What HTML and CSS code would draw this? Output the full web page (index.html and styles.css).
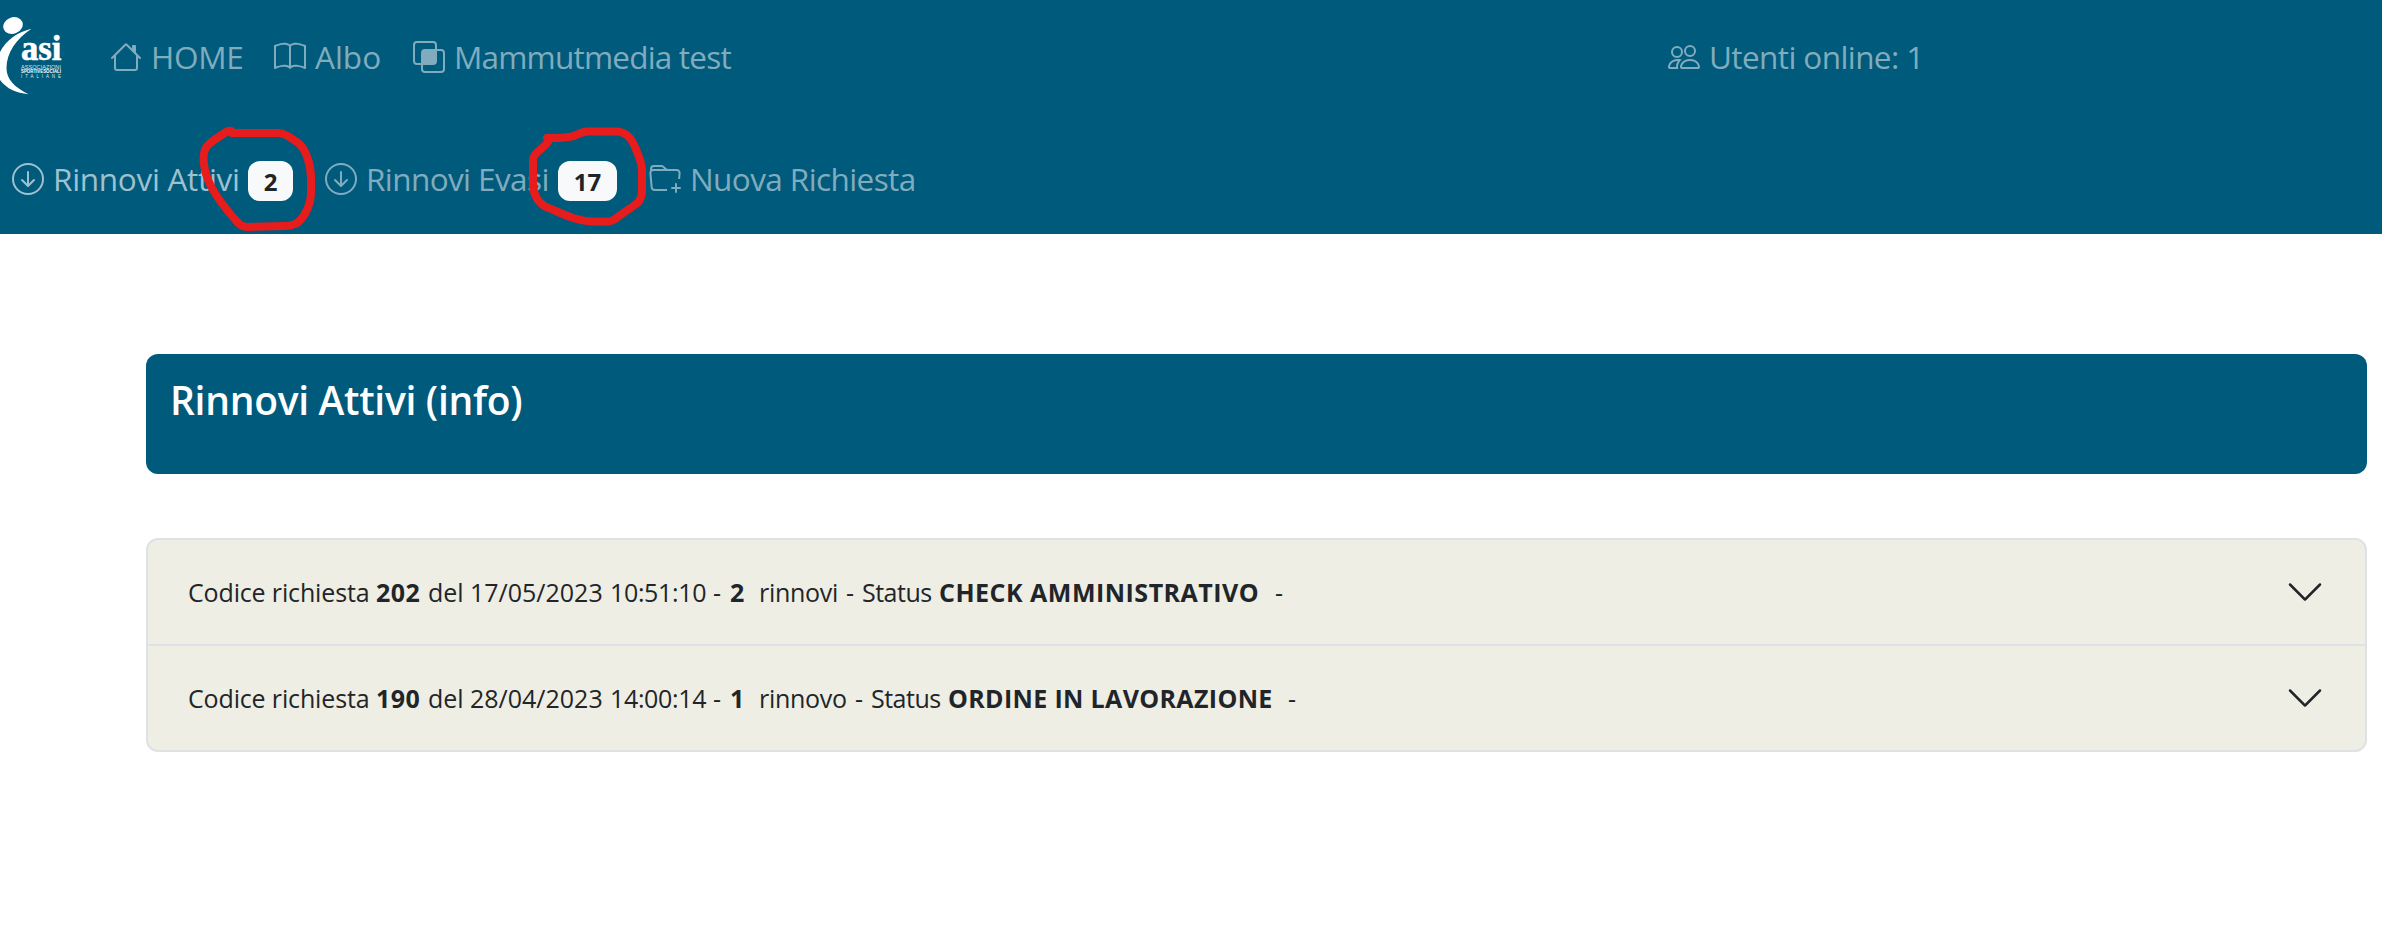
FILE: index.html
```html
<!DOCTYPE html>
<html lang="it">
<head>
<meta charset="utf-8">
<title>Rinnovi Attivi</title>
<link rel="stylesheet" href="styles.css">
</head>
<body>
<header class="header">
  <nav class="nav nav-main">
    <a class="brand"><svg class="logo" width="64" height="80" viewBox="0 17 64 80">
      <ellipse cx="13" cy="25.5" rx="10" ry="8.2" transform="rotate(-22 13 25.5)" fill="#fff"/>
      <path d="M31.500 28.800C18 32 6 40 0 52L-3 66L0 80C7 89 16 93 28.500 94.200C14 87 6.500 79 6.500 68C6.500 53 16 39 31.500 28.800Z" fill="#fff"/>
      <text class="logo-name" x="21" y="60" textLength="40.500" lengthAdjust="spacingAndGlyphs">asi</text>
      <text class="logo-sub" x="21" y="68.800" textLength="40" lengthAdjust="spacingAndGlyphs">ASSOCIAZIONI</text>
      <text class="logo-sub logo-strong" x="21" y="73.200" textLength="40" lengthAdjust="spacingAndGlyphs">SPORTIVESOCIALI</text>
      <text class="logo-sub" x="21" y="77.800" textLength="40">ITALIANE</text>
    </svg></a>
    <a class="link home"><svg class="icon" viewBox="0 0 16 16"><path d="M8.707 1.500a1 1 0 0 0-1.414 0L.646 8.146a.5.5 0 0 0 .708.708L2 8.207V13.500A1.500 1.500 0 0 0 3.500 15h9a1.500 1.500 0 0 0 1.500-1.500V8.207l.646.647a.5.5 0 0 0 .708-.708L13 5.793V2.500a.5.5 0 0 0-.5-.5h-1a.5.5 0 0 0-.5.5v1.293L8.707 1.500ZM13 7.207V13.500a.5.5 0 0 1-.5.5h-9a.5.5 0 0 1-.5-.5V7.207l5-5 5 5Z"/></svg><span>HOME</span></a>
    <a class="link albo"><svg class="icon" viewBox="0 0 16 16"><path d="M1 2.828c.885-.37 2.154-.769 3.388-.893 1.330-.134 2.458.063 3.112.752v9.746c-.935-.53-2.120-.603-3.213-.493-1.180.12-2.370.461-3.287.811V2.828zm7.500-.141c.654-.689 1.782-.886 3.112-.752 1.234.124 2.503.523 3.388.893v9.923c-.918-.35-2.107-.692-3.287-.81-1.094-.111-2.278-.039-3.213.492V2.687zM8 1.783C7.015.936 5.587.81 4.287.94c-1.514.153-3.042.672-3.994 1.105A.5.5 0 0 0 0 2.500v11a.5.5 0 0 0 .707.455c.882-.4 2.303-.881 3.680-1.020 1.409-.142 2.590.087 3.223.877a.5.5 0 0 0 .78 0c.633-.79 1.814-1.019 3.222-.877 1.378.139 2.800.62 3.681 1.020A.5.5 0 0 0 16 13.500v-11a.5.5 0 0 0-.293-.455c-.952-.433-2.480-.952-3.994-1.105C10.413.809 8.985.936 8 1.783z"/></svg><span>Albo</span></a>
    <a class="link mammut"><svg class="icon" viewBox="0 0 16 16"><path d="M0 2a2 2 0 0 1 2-2h8a2 2 0 0 1 2 2v2h2a2 2 0 0 1 2 2v8a2 2 0 0 1-2 2H6a2 2 0 0 1-2-2v-2H2a2 2 0 0 1-2-2V2zm5 10v2a1 1 0 0 0 1 1h8a1 1 0 0 0 1-1V6a1 1 0 0 0-1-1h-2v5a2 2 0 0 1-2 2H5zm6-8V2a1 1 0 0 0-1-1H2a1 1 0 0 0-1 1v8a1 1 0 0 0 1 1h2V6a2 2 0 0 1 2-2h5z"/></svg><span>Mammutmedia test</span></a>
    <a class="link users"><svg class="icon" viewBox="0 0 16 16"><path d="M15 14s1 0 1-1-1-4-5-4-5 3-5 4 1 1 1 1h8Zm-7.978-1A.261.261 0 0 1 7 12.996c.001-.264.167-1.030.76-1.720C8.312 10.629 9.282 10 11 10c1.717 0 2.687.63 3.240 1.276.593.69.758 1.457.76 1.720l-.008.002a.274.274 0 0 1-.014.002H7.022ZM11 7a2 2 0 1 0 0-4 2 2 0 0 0 0 4Zm3-2a3 3 0 1 1-6 0 3 3 0 0 1 6 0ZM6.936 9.280a5.880 5.880 0 0 0-1.230-.247A7.350 7.350 0 0 0 5 9c-4 0-5 3-5 4 0 .667.333 1 1 1h4.216A2.238 2.238 0 0 1 5 13c0-1.010.377-2.042 1.090-2.904.243-.294.526-.569.846-.816ZM4.920 10A5.493 5.493 0 0 0 4 13H1c0-.26.164-1.030.76-1.724.545-.636 1.492-1.256 3.160-1.275ZM1.500 5.500a3 3 0 1 1 6 0 3 3 0 0 1-6 0Zm3-2a2 2 0 1 0 0 4 2 2 0 0 0 0-4Z"/></svg><span>Utenti online: 1</span></a>
  </nav>
  <nav class="nav nav-sub">
    <a class="link attivi active"><svg class="icon" viewBox="0 0 16 16"><path d="M1 8a7 7 0 1 0 14 0A7 7 0 0 0 1 8zm15 0A8 8 0 1 1 0 8a8 8 0 0 1 16 0zM8.500 4.500a.5.5 0 0 0-1 0v5.793L5.354 8.146a.5.5 0 1 0-.708.708l3 3a.5.5 0 0 0 .708 0l3-3a.5.5 0 0 0-.708-.708L8.500 10.293V4.500z"/></svg><span>Rinnovi Attivi</span><b class="badge badge-one">2</b></a>
    <a class="link evasi"><svg class="icon" viewBox="0 0 16 16"><path d="M1 8a7 7 0 1 0 14 0A7 7 0 0 0 1 8zm15 0A8 8 0 1 1 0 8a8 8 0 0 1 16 0zM8.500 4.500a.5.5 0 0 0-1 0v5.793L5.354 8.146a.5.5 0 1 0-.708.708l3 3a.5.5 0 0 0 .708 0l3-3a.5.5 0 0 0-.708-.708L8.500 10.293V4.500z"/></svg><span>Rinnovi Evasi</span><b class="badge badge-two">17</b></a>
    <a class="link nuova"><svg class="icon" viewBox="0 0 16 16"><path d="m.5 3 .04.87a1.990 1.990 0 0 0-.342 1.311l.637 7A2 2 0 0 0 2.826 14H9v-1H2.826a1 1 0 0 1-.995-.91l-.637-7A1 1 0 0 1 2.190 4h11.620a1 1 0 0 1 .996 1.090L14.540 8h1.005l.256-2.819A2 2 0 0 0 13.810 3H9.828a2 2 0 0 1-1.414-.586l-.828-.828A2 2 0 0 0 6.172 1H2.500a2 2 0 0 0-2 2Zm5.672-1a1 1 0 0 1 .707.293L7.586 3H2.190c-.24 0-.47.042-.683.12L1.500 2.980a1 1 0 0 1 1-.98h3.672Z"/><path d="M13.500 10a.5.5 0 0 1 .5.5V12h1.500a.5.5 0 1 1 0 1H14v1.500a.5.5 0 1 1-1 0V13h-1.500a.5.5 0 0 1 0-1H13v-1.500a.5.5 0 0 1 .5-.5Z"/></svg><span>Nuova Richiesta</span></a>
  </nav>
</header>
<svg class="marks" width="680" height="240" viewBox="0 0 680 240">
  <path d="M232 133H279C285 133 291 138 297 142C306 148 311 165 311 178V192C311 207 302 221 295 224Q291 226 285 226L248 227C239 227 236 220 232 216C221 203 210 188 206 174C203 163 202 151 208 145C212 141 223 134 227 131.500Q229 130.500 231 131"/>
  <path d="M547 138C558 138 569 138 575 135.500C580 133 583 131.500 588 131.500H616C628 131.500 633 141 637 152C640 159 642 163 642 171V190C642 200 638 203 632 207L619 216C615 219 613 221.500 608 221.500H594C574 221.500 558 211 546 207C538 203 533 194 533 184V160C533 153 543 149 547 143Q549 141 549 138"/>
</svg>
<main class="content">
  <section class="banner"><h1>Rinnovi Attivi (info)</h1></section>
  <section class="accordion">
    <div class="item">
      <p class="line">
        <span class="codice">Codice richiesta</span><b class="num">202</b><span class="del">del</span><span class="date">17/05/2023</span><span class="time">10:51:10</span><span class="dash">-</span><b class="count">2</b><span class="rinnovi">rinnovi</span><span class="sep">-</span><span class="status">Status</span><b class="state check">CHECK AMMINISTRATIVO</b><span>-</span>
      </p>
      <svg class="chevron" viewBox="0 0 16 16"><path d="M1.646 4.646a.5.5 0 0 1 .708 0L8 10.293l5.646-5.647a.5.5 0 0 1 .708.708l-6 6a.5.5 0 0 1-.708 0l-6-6a.5.5 0 0 1 0-.708z"/></svg>
    </div>
    <div class="item">
      <p class="line">
        <span class="codice">Codice richiesta</span><b class="num">190</b><span class="del">del</span><span class="date">28/04/2023</span><span class="time">14:00:14</span><span class="dash">-</span><b class="count">1</b><span class="rinnovo">rinnovo</span><span class="sep">-</span><span class="status">Status</span><b class="state ordine">ORDINE IN LAVORAZIONE</b><span>-</span>
      </p>
      <svg class="chevron" viewBox="0 0 16 16"><path d="M1.646 4.646a.5.5 0 0 1 .708 0L8 10.293l5.646-5.647a.5.5 0 0 1 .708.708l-6 6a.5.5 0 0 1-.708 0l-6-6a.5.5 0 0 1 0-.708z"/></svg>
    </div>
  </section>
</main>
</body>
</html>
```
FILE: styles.css
```css
* { box-sizing: border-box; }
body {
  margin: 0;
  background: #fff;
  color: #212529;
  font-family: "Open Sans", "Noto Sans", sans-serif;
}
.header {
  height: 234px;
  background: #005a7c;
}
.nav {
  display: flex;
  align-items: center;
}
.nav-main { height: 114px; }
.nav-sub { height: 120px; padding: 11px 0 0 12px; align-items: flex-start; }
.brand { width: 110px; height: 80px; }
.logo { display: block; }
.logo-name {
  font: bold 36px "Liberation Serif", serif;
  fill: #fff;
  stroke: #fff;
  stroke-width: .6px;
}
.logo-sub { font: 4.500px "Liberation Sans", sans-serif; fill: #dbe8ed; }
.logo-strong { font-weight: bold; fill: #fff; }
.link {
  display: flex;
  align-items: center;
  height: 114px;
  color: #80acbd;
  font-size: 31.500px;
  letter-spacing: -.6px;
  white-space: nowrap;
}
.link span { padding-bottom: 2px; }
.nav-sub .link { height: 108px; }
.link.active { color: #9fc1ce; }
.icon {
  width: 32px;
  height: 32px;
  flex: none;
  margin-right: 9px;
  fill: currentColor;
}
.home { width: 164px; letter-spacing: -.3px; }
.albo { width: 139px; letter-spacing: 0; }
.mammut { width: 1255px; letter-spacing: -.8px; }
.attivi { width: 313px; letter-spacing: -.3px; }
.evasi { width: 324px; }
.attivi span { width: 195px; }
.evasi span { width: 192px; }
.badge {
  height: 40px;
  margin-top: 4px;
  border-radius: 12px;
  background: #f8f9fa;
  color: #212529;
  font-size: 24px;
  letter-spacing: 0;
  line-height: 42px;
  text-align: center;
}
.badge-one { width: 45px; }
.badge-two { width: 59px; }
.marks {
  position: absolute;
  left: 0;
  top: 0;
  fill: none;
  stroke: #e71c1c;
  stroke-width: 8px;
  stroke-linecap: round;
  stroke-linejoin: round;
}
.content { padding: 120px 15px 0 146px; }
.banner {
  height: 120px;
  padding: 20px 24px;
  border-radius: 12px;
  background: #005a7c;
}
h1 {
  margin: 0;
  color: #fff;
  font-size: 39px;
  font-weight: 600;
  letter-spacing: -.3px;
  line-height: 51px;
}
.accordion {
  margin-top: 64px;
  border: 2px solid #dee2e6;
  border-radius: 12px;
  background: #eeeee4;
}
.item {
  display: flex;
  align-items: center;
  justify-content: space-between;
  height: 104px;
  padding: 0 40px;
}
.item + .item { height: 106px; border-top: 2px solid #dee2e6; }
.line {
  display: flex;
  margin: 0;
  font-size: 25px;
  line-height: 38px;
  white-space: nowrap;
}
.codice { width: 188px; letter-spacing: -.15px; }
.num { width: 52px; letter-spacing: .5px; }
.del { width: 42px; }
.date { width: 140px; }
.time { width: 103px; letter-spacing: -.35px; }
.dash { width: 17px; }
.count { width: 29px; }
.rinnovi { width: 87px; letter-spacing: -.3px; }
.rinnovo { width: 96px; letter-spacing: -.3px; }
.sep { width: 16px; }
.status { width: 77px; letter-spacing: -.5px; }
.check { width: 336px; letter-spacing: .5px; }
.ordine { width: 340px; letter-spacing: .35px; }
.chevron { width: 40px; height: 40px; fill: #212529; }
```
